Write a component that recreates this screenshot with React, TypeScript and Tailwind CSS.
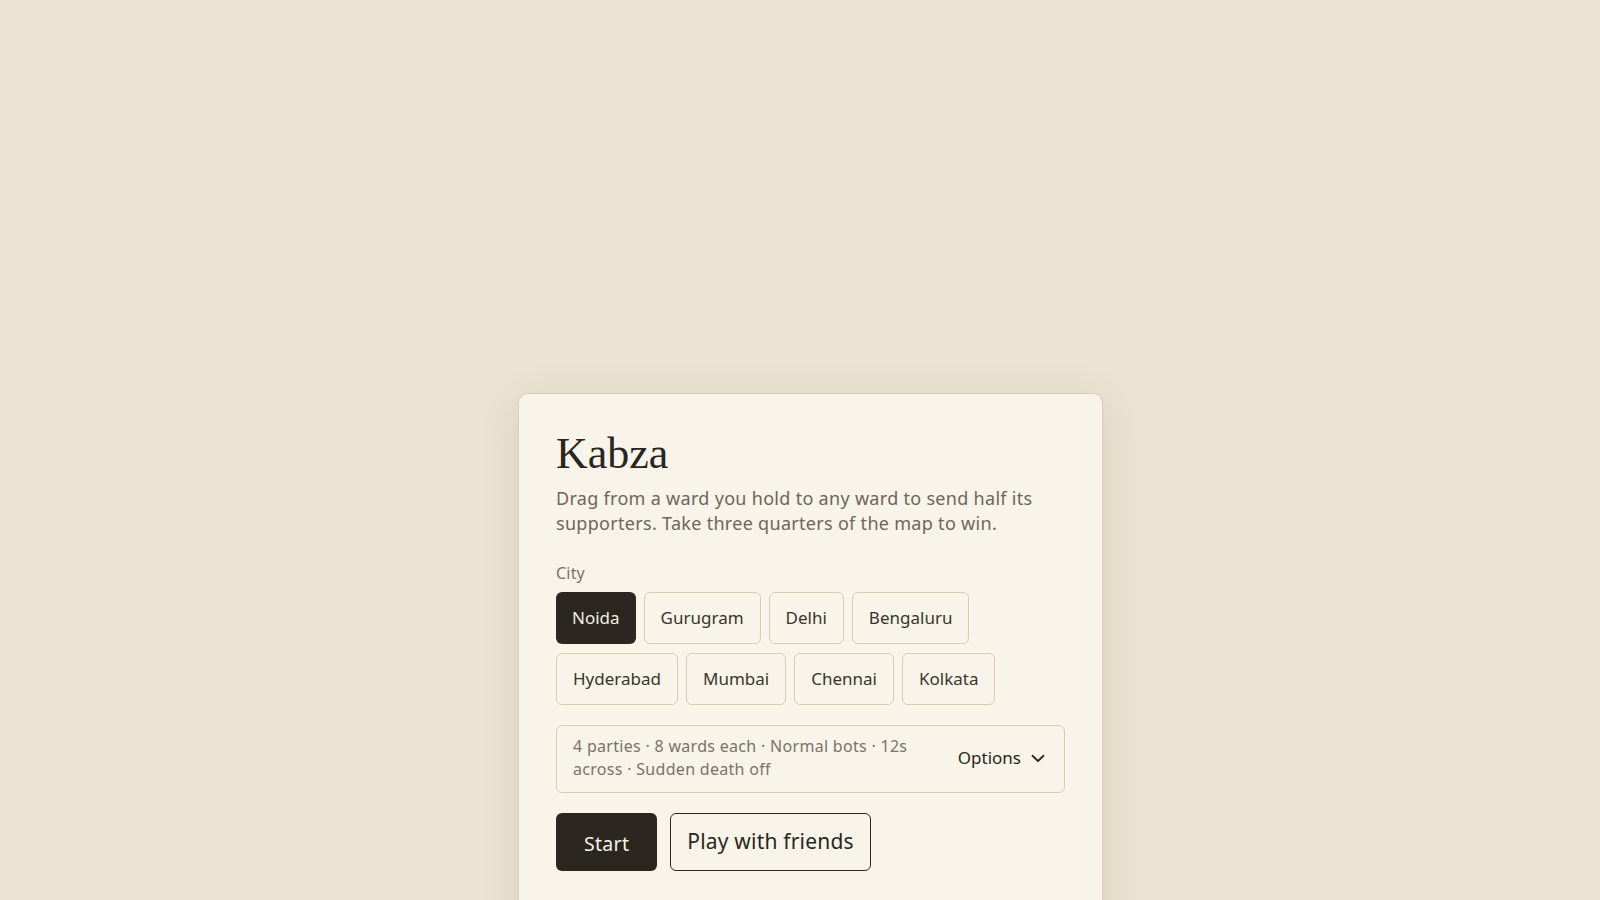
import React, { useState } from "react";

const CITIES = [
  "Noida",
  "Gurugram",
  "Delhi",
  "Bengaluru",
  "Hyderabad",
  "Mumbai",
  "Chennai",
  "Kolkata",
];

const sans = "font-['Noto_Sans',_'Open_Sans',_sans-serif]";

function Chevron() {
  return (
    <svg width="14" height="9" viewBox="0 0 14 9" fill="none" aria-hidden="true">
      <path
        d="M1.5 1.75 L7 7 L12.5 1.75"
        stroke="currentColor"
        strokeWidth="1.8"
        strokeLinecap="round"
        strokeLinejoin="round"
      />
    </svg>
  );
}

export default function App() {
  const [city, setCity] = useState("Noida");

  return (
    <div className={`min-h-screen bg-[#ebe4d3] flex justify-center items-start pl-[21px] pt-[393px] ${sans}`}>
      <div className="w-[585px] min-h-[560px] shrink-0 rounded-[10px] border border-[#d9cfbb] bg-[#f8f4ea] pl-[37px] pr-[37px] pt-9 pb-9 shadow-[0_10px_40px_rgba(110,90,50,0.16)]">
        <h1 className="mt-[2px] font-['Liberation_Serif',_'Times_New_Roman',_serif] text-[44px] leading-none font-normal text-[#2a2520]">
          Kabza
        </h1>
        <p className="mt-[10px] text-[18px] leading-[25px] tracking-[0.3px] text-[#6e665b]">
          Drag from a ward you hold to any ward to send half its supporters. Take three quarters of the map to win.
        </p>

        <div className="mt-[25px] text-[16px] leading-6 tracking-[0.2px] text-[#7b7367]">City</div>
        <div className="mt-[7px] flex flex-wrap gap-x-2 gap-y-[9px]">
          {CITIES.map((c) => {
            const active = c === city;
            return (
              <button
                key={c}
                type="button"
                onClick={() => setCity(c)}
                className={
                  active
                    ? "h-[52px] px-4 rounded-[6px] bg-[#2b2620] text-[17px] text-[#f3eee3]"
                    : "h-[52px] px-4 rounded-[6px] border border-[#d8ccb3] bg-[#f8f4ea] text-[17px] text-[#3a342c]"
                }
              >
                {c}
              </button>
            );
          })}
        </div>

        <div className="mt-5 flex items-center gap-4 rounded-[6px] border border-[#d8ccb3] pl-4 pr-[19px] pt-[9px] pb-[11px]">
          <p className="flex-1 text-[16px] leading-[23px] tracking-[0.3px] text-[#7b7367]">
            4 parties · 8 wards each · Normal bots · 12s across · Sudden death off
          </p>
          <button type="button" className="flex items-center gap-[10px] shrink-0 text-[17px] text-[#2b2620]">
            Options
            <Chevron />
          </button>
        </div>

        <div className="mt-5 flex items-center gap-[13px]">
          <button
            type="button"
            className="h-[58px] px-[28px] pt-[3px] rounded-[6px] bg-[#2b2620] text-[19.5px] tracking-[0.3px] text-[#f5f0e6]"
          >
            Start
          </button>
          <button
            type="button"
            className="h-[58px] px-4 rounded-[6px] border border-[#2b2620] bg-[#f8f4ea] text-[21px] tracking-[0.2px] text-[#2b2620]"
          >
            Play with friends
          </button>
        </div>
      </div>
    </div>
  );
}
